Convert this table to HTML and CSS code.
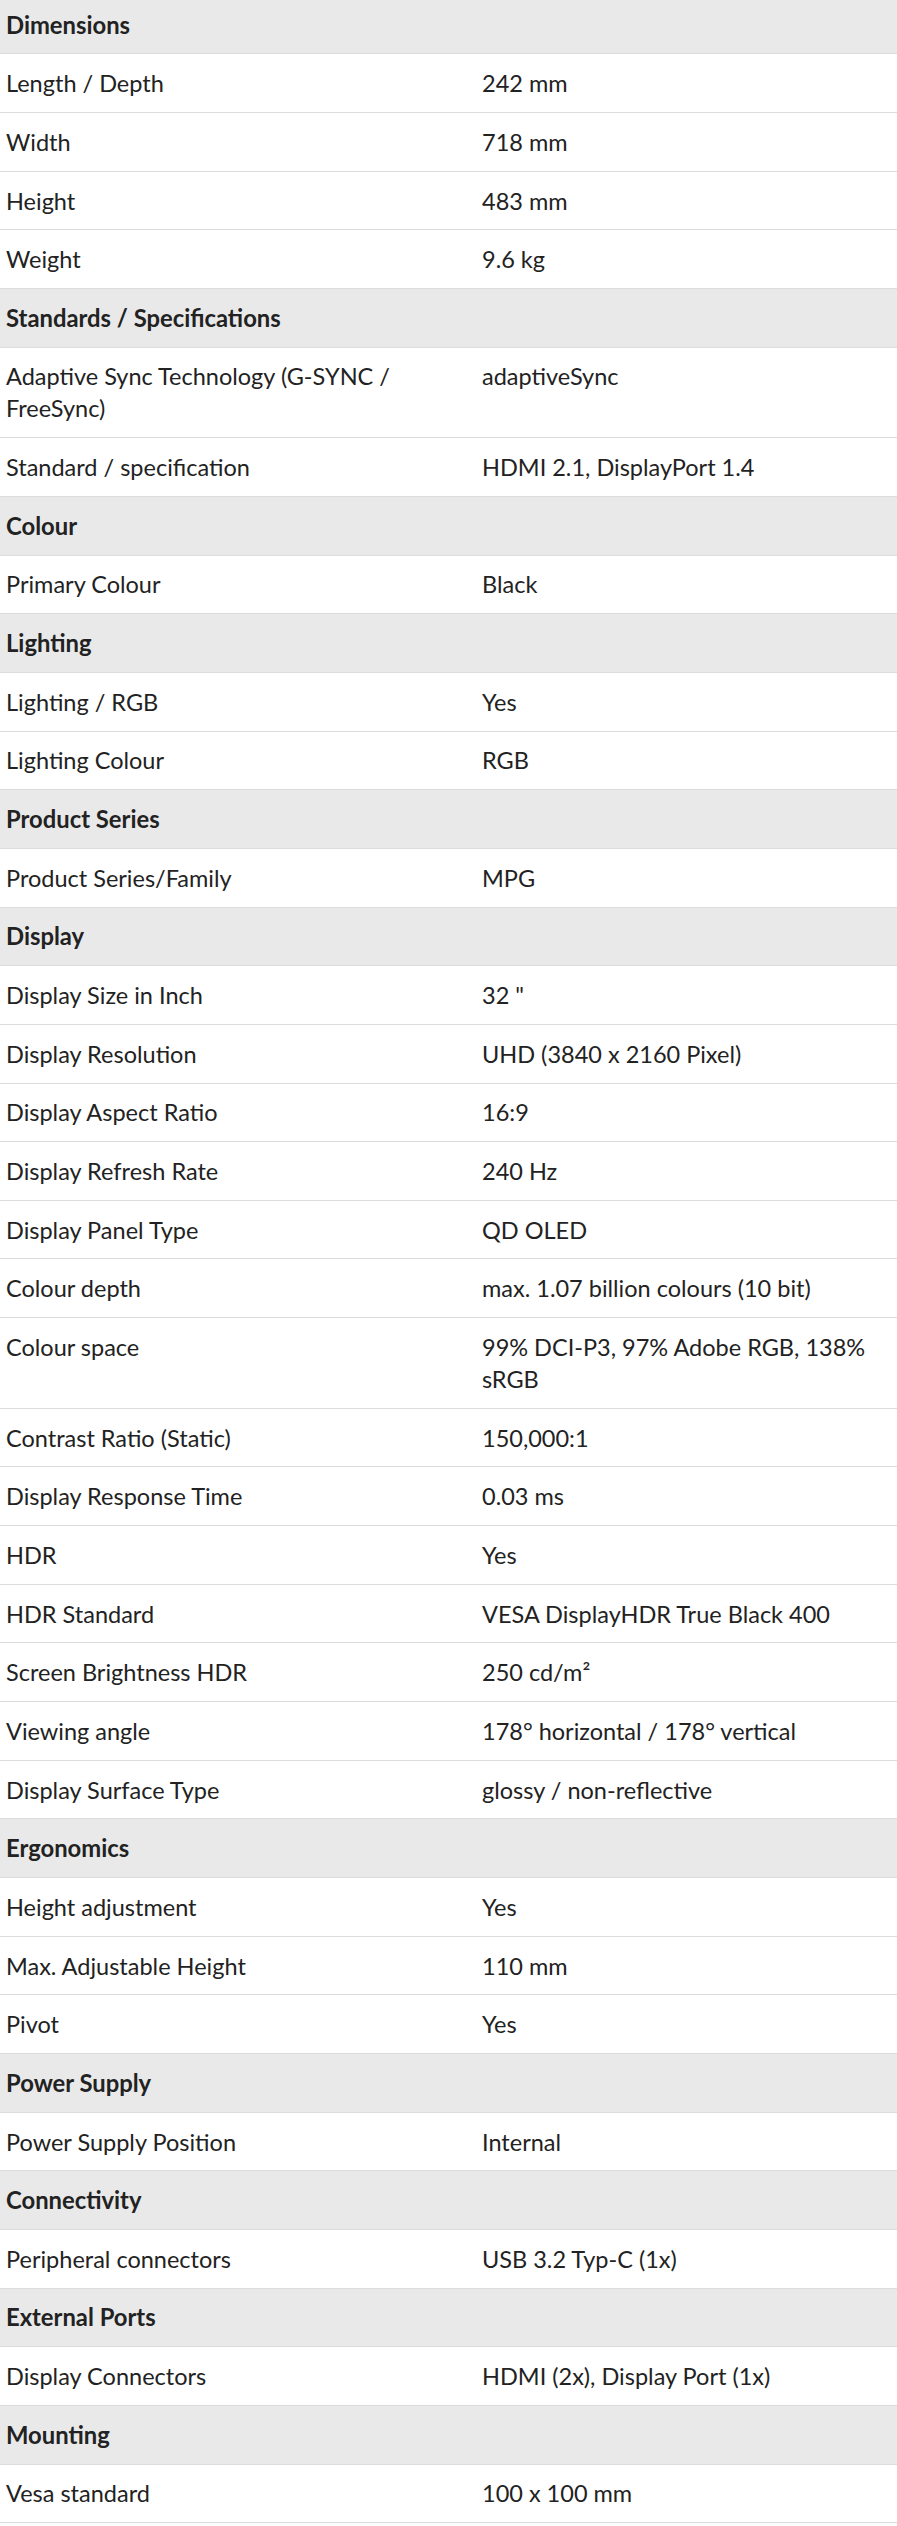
FILE: index.html
```html
<!DOCTYPE html>
<html lang="en">
<head>
<meta charset="utf-8">
<title>Specifications</title>
<link rel="stylesheet" href="styles.css">
</head>
<body>
<div class="specs">
  <div class="group">Dimensions</div>
  <div class="row"><div class="label">Length / Depth</div><div class="value">242 mm</div></div>
  <div class="row"><div class="label">Width</div><div class="value">718 mm</div></div>
  <div class="row"><div class="label">Height</div><div class="value">483 mm</div></div>
  <div class="row"><div class="label">Weight</div><div class="value">9.6 kg</div></div>

  <div class="group">Standards / Specifications</div>
  <div class="row"><div class="label">Adaptive Sync Technology (G-SYNC / FreeSync)</div><div class="value">adaptiveSync</div></div>
  <div class="row"><div class="label">Standard / specification</div><div class="value">HDMI 2.1, DisplayPort 1.4</div></div>

  <div class="group">Colour</div>
  <div class="row"><div class="label">Primary Colour</div><div class="value">Black</div></div>

  <div class="group">Lighting</div>
  <div class="row"><div class="label">Lighting / RGB</div><div class="value">Yes</div></div>
  <div class="row"><div class="label">Lighting Colour</div><div class="value">RGB</div></div>

  <div class="group">Product Series</div>
  <div class="row"><div class="label">Product Series/Family</div><div class="value">MPG</div></div>

  <div class="group">Display</div>
  <div class="row"><div class="label">Display Size in Inch</div><div class="value">32 "</div></div>
  <div class="row"><div class="label">Display Resolution</div><div class="value">UHD (3840 x 2160 Pixel)</div></div>
  <div class="row"><div class="label">Display Aspect Ratio</div><div class="value">16:9</div></div>
  <div class="row"><div class="label">Display Refresh Rate</div><div class="value">240 Hz</div></div>
  <div class="row"><div class="label">Display Panel Type</div><div class="value">QD OLED</div></div>
  <div class="row"><div class="label">Colour depth</div><div class="value">max. 1.07 billion colours (10 bit)</div></div>
  <div class="row"><div class="label">Colour space</div><div class="value">99% DCI-P3, 97% Adobe RGB, 138% sRGB</div></div>
  <div class="row"><div class="label">Contrast Ratio (Static)</div><div class="value">150,000:1</div></div>
  <div class="row"><div class="label">Display Response Time</div><div class="value">0.03 ms</div></div>
  <div class="row"><div class="label">HDR</div><div class="value">Yes</div></div>
  <div class="row"><div class="label">HDR Standard</div><div class="value">VESA DisplayHDR True Black 400</div></div>
  <div class="row"><div class="label">Screen Brightness HDR</div><div class="value">250 cd/m²</div></div>
  <div class="row"><div class="label">Viewing angle</div><div class="value">178° horizontal / 178° vertical</div></div>
  <div class="row"><div class="label">Display Surface Type</div><div class="value">glossy / non-reflective</div></div>

  <div class="group">Ergonomics</div>
  <div class="row"><div class="label">Height adjustment</div><div class="value">Yes</div></div>
  <div class="row"><div class="label">Max. Adjustable Height</div><div class="value">110 mm</div></div>
  <div class="row"><div class="label">Pivot</div><div class="value">Yes</div></div>

  <div class="group">Power Supply</div>
  <div class="row"><div class="label">Power Supply Position</div><div class="value">Internal</div></div>

  <div class="group">Connectivity</div>
  <div class="row"><div class="label">Peripheral connectors</div><div class="value">USB 3.2 Typ-C (1x)</div></div>

  <div class="group">External Ports</div>
  <div class="row"><div class="label">Display Connectors</div><div class="value">HDMI (2x), Display Port (1x)</div></div>

  <div class="group">Mounting</div>
  <div class="row"><div class="label">Vesa standard</div><div class="value">100 x 100 mm</div></div>
</div>
</body>
</html>
```

FILE: styles.css
```css
html, body {
  margin: 0;
  padding: 0;
  background: #ffffff;
}

.specs {
  margin-top: -4.3px;
  font-family: Lato, "Noto Sans", sans-serif;
  font-size: 23.5px;
  line-height: 32px;
  color: #222222;
}

.group {
  background: #e9e9e9;
  font-weight: 700;
  font-size: 23.8px;
  padding: 12.83px 6px;
  border-bottom: 1px solid #dcdcdc;
}

.row {
  display: flex;
  border-bottom: 1px solid #dcdcdc;
}

.label,
.value {
  padding: 12.83px 6px;
}

.label {
  flex: 0 0 476px;
  box-sizing: border-box;
}

.value {
  flex: 1 1 0;
  min-width: 0;
}
```
